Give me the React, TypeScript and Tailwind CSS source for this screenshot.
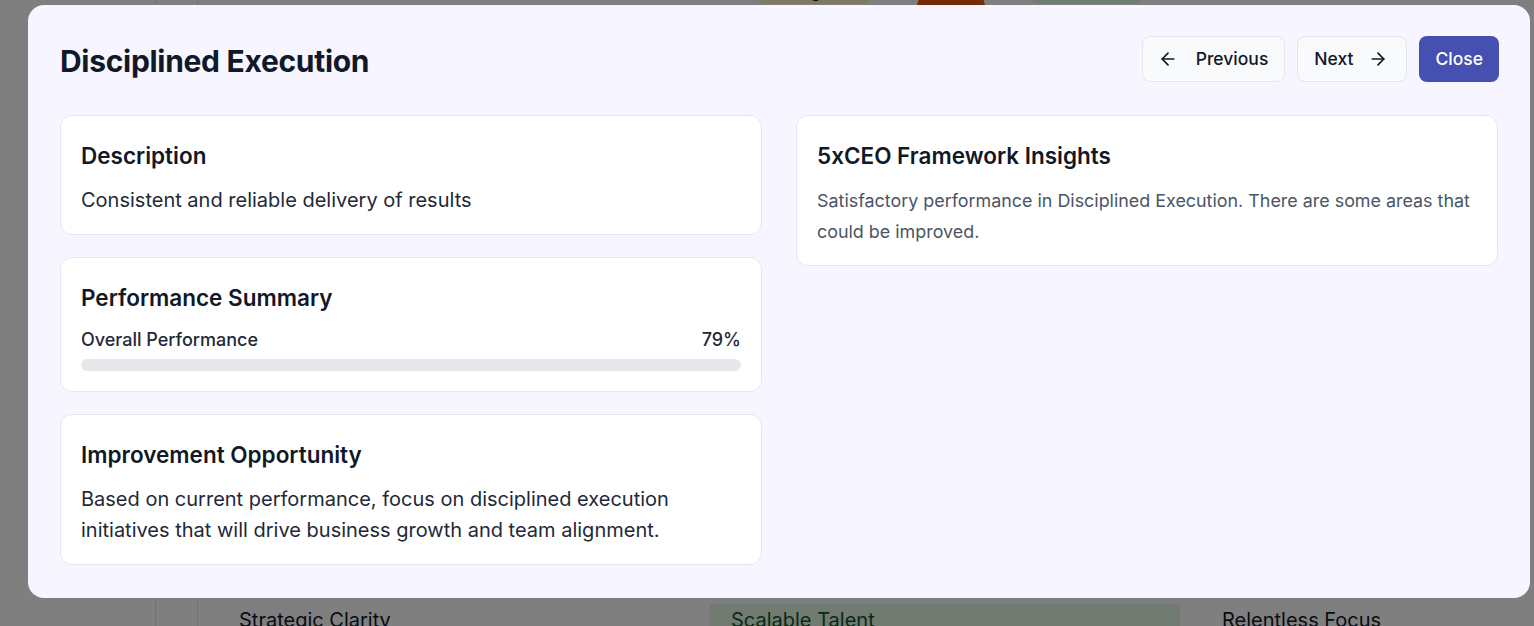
import { ArrowLeft, ArrowRight } from "lucide-react";

const font = { fontFamily: "Inter, 'Noto Sans', sans-serif" };

function Card({ title, children }: { title: string; children: React.ReactNode }) {
  return (
    <div className="rounded-xl border border-[#e6e7ee] bg-white px-5 pt-[26px] pb-[18px]">
      <h3 className="mb-[15px] text-[22.5px] leading-7 font-semibold text-[#111827]">{title}</h3>
      {children}
    </div>
  );
}

function Background() {
  return (
    <div className="flex h-[626px] w-full bg-white">
      <div className="w-[156px] border-r border-gray-200" />
      <div className="w-[42px] border-r border-gray-200" />
      <div className="flex flex-1 flex-col justify-between">
        <div className="-mt-[22px] flex items-start gap-[42px] pl-[556px]">
          <div className="flex h-[26px] w-[120px] items-center justify-center rounded-full bg-[#fef3c7] text-lg text-gray-900">
            Energized
          </div>
          <div className="h-[70px] w-[70px] rounded-full bg-[#ea580c]" />
          <div className="flex h-[26px] w-[118px] items-center justify-center rounded-full bg-[#dcfce7] text-lg text-gray-900">
            Scalable
          </div>
        </div>
        <div className="-mb-[14px] flex h-[36px] text-xl">
          <div className="w-[512px] pl-[41px] pt-[2px] text-gray-900">Strategic Clarity</div>
          <div className="w-[470px] bg-[#e3f7e4] pl-[21px] pt-[2px] text-[#14532d]">Scalable Talent</div>
          <div className="pl-[42px] pt-[2px] text-gray-900">Relentless Focus</div>
        </div>
      </div>
    </div>
  );
}

export default function App() {
  return (
    <div className="relative h-[626px] w-full overflow-hidden" style={font}>
      <Background />
      <div className="absolute inset-0 bg-black/50" />
      <div className="absolute left-[28px] top-[5px] h-[593px] w-[1502px] rounded-2xl bg-[#f7f5ff] pl-8 pr-[31px] pt-[31px]">
        <div className="mb-[33px] flex items-center justify-between">
          <h2 className="mt-1 text-[30px] leading-9 font-bold tracking-[-0.01em] text-[#111827]">
            Disciplined Execution
          </h2>
          <div className="flex items-center gap-3">
            <button className="flex h-[46px] items-center gap-[18px] rounded-lg border border-[#e4e6ee] bg-[#f9fafc] pl-[15px] pr-4 text-[17.5px] font-medium text-[#111827]">
              <ArrowLeft size={20} strokeWidth={2} />
              Previous
            </button>
            <button className="flex h-[46px] items-center gap-[15px] rounded-lg border border-[#e4e6ee] bg-[#f9fafc] pl-4 pr-[18px] text-[17.5px] font-medium text-[#111827]">
              Next
              <ArrowRight size={20} strokeWidth={2} />
            </button>
            <button className="flex h-[46px] items-center rounded-lg bg-[#4550b0] px-4 text-[17.5px] font-medium text-white">
              Close
            </button>
          </div>
        </div>
        <div className="grid grid-cols-2 gap-[34px] pr-px">
          <div className="flex flex-col gap-[22px]">
            <Card title="Description">
              <p className="text-[20px] leading-[31px] text-[#1f2937]">Consistent and reliable delivery of results</p>
            </Card>
            <Card title="Performance Summary">
              <div className="flex items-center justify-between text-[18px] leading-[26px] font-medium text-[#1f2937]">
                <span>Overall Performance</span>
                <span>79%</span>
              </div>
              <div className="mt-[6px] mb-[2px] h-3 w-full rounded-full bg-[#e5e7eb]" />
            </Card>
            <Card title="Improvement Opportunity">
              <p className="text-[20px] leading-[31px] text-[#1f2937]">
                Based on current performance, focus on disciplined execution initiatives that will drive business
                growth and team alignment.
              </p>
            </Card>
          </div>
          <div className="flex flex-col">
            <Card title="5xCEO Framework Insights">
              <p className="text-[17.9px] leading-[31px] text-[#4b5563]">
                Satisfactory performance in Disciplined Execution. There are some areas that could be improved.
              </p>
            </Card>
          </div>
        </div>
      </div>
    </div>
  );
}
